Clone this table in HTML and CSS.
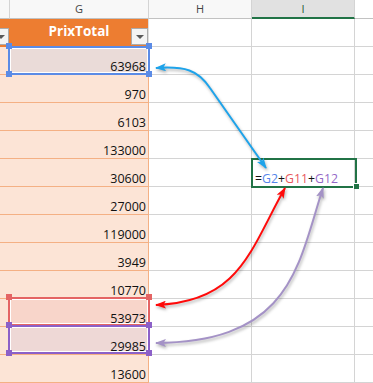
FILE: index.html
```html
<!DOCTYPE html>
<html>
<head>
<meta charset="utf-8">
<link rel="stylesheet" href="styles.css">
</head>
<body>
<div class="sheet">
  <div class="grid">
    <div class="ch"></div>
    <div class="ch">G</div>
    <div class="ch">H</div>
    <div class="ch ch-sel">I</div>
    <div class="ch ch-end"></div>

    <div class="th th-f"><span class="dd"></span></div>
    <div class="th th-g"><span></span><span class="th-label">PrixTotal</span><span class="dd"></span></div>
    <div class="e"></div><div class="e"></div><div class="e e-last"></div>

    <div class="d"></div><div class="d d-g t-blue">63968</div><div class="e"></div><div class="e"></div><div class="e e-last"></div>
    <div class="d"></div><div class="d d-g">970</div><div class="e"></div><div class="e"></div><div class="e e-last"></div>
    <div class="d"></div><div class="d d-g">6103</div><div class="e"></div><div class="e"></div><div class="e e-last"></div>
    <div class="d"></div><div class="d d-g">133000</div><div class="e"></div><div class="e"></div><div class="e e-last"></div>
    <div class="d"></div><div class="d d-g">30600</div><div class="e"></div><div class="e fx">=<span class="rb">G2</span>+<span class="rr">G11</span>+<span class="rp">G12</span></div><div class="e e-last"></div>
    <div class="d"></div><div class="d d-g">27000</div><div class="e"></div><div class="e"></div><div class="e e-last"></div>
    <div class="d"></div><div class="d d-g">119000</div><div class="e"></div><div class="e"></div><div class="e e-last"></div>
    <div class="d"></div><div class="d d-g">3949</div><div class="e"></div><div class="e"></div><div class="e e-last"></div>
    <div class="d"></div><div class="d d-g">10770</div><div class="e"></div><div class="e"></div><div class="e e-last"></div>
    <div class="d"></div><div class="d d-g t-red">53973</div><div class="e"></div><div class="e"></div><div class="e e-last"></div>
    <div class="d"></div><div class="d d-g t-purple">29985</div><div class="e"></div><div class="e"></div><div class="e e-last"></div>
    <div class="d"></div><div class="d d-g">13600</div><div class="e"></div><div class="e"></div><div class="e e-last"></div>
  </div>

  <div class="sel sel-blue"><i class="hd tl"></i><i class="hd tr"></i><i class="hd bl"></i><i class="hd br"></i></div>
  <div class="sel sel-red"><i class="hd tl"></i><i class="hd tr"></i><i class="hd bl"></i><i class="hd br"></i></div>
  <div class="sel sel-purple"><i class="hd tl"></i><i class="hd tr"></i><i class="hd bl"></i><i class="hd br"></i></div>
  <div class="active"><i class="fill-handle"></i></div>

  <svg class="arrows" width="373" height="383" viewBox="0 0 373 383">
    <defs>
      <marker id="mb" viewBox="0 0 11 8" refX="10" refY="4" markerWidth="11" markerHeight="8" markerUnits="userSpaceOnUse" orient="auto-start-reverse">
        <path d="M0,0 L11,4 L0,8 L2.5,4 z" fill="#1ea3ea"/>
      </marker>
      <marker id="mr" viewBox="0 0 11 8" refX="10" refY="4" markerWidth="11" markerHeight="8" markerUnits="userSpaceOnUse" orient="auto-start-reverse">
        <path d="M0,0 L11,4 L0,8 L2.5,4 z" fill="#ff0a0a"/>
      </marker>
      <marker id="mp" viewBox="0 0 11 8" refX="10" refY="4" markerWidth="11" markerHeight="8" markerUnits="userSpaceOnUse" orient="auto-start-reverse">
        <path d="M0,0 L11,4 L0,8 L2.5,4 z" fill="#a492c6"/>
      </marker>
    </defs>
    <path class="ar ar-b" d="M156,68 C185,66 198,70 210,88 L266,168" marker-start="url(#mb)" marker-end="url(#mb)"/>
    <path class="ar ar-r" d="M285,188 C250,250 240,302 156,305" marker-start="url(#mr)" marker-end="url(#mr)"/>
    <path class="ar ar-p" d="M323,188 C298,265 292,342 156,343" marker-start="url(#mp)" marker-end="url(#mp)"/>
  </svg>
</div>
</body>
</html>
```
FILE: styles.css
```css
html, body {
  margin: 0;
  padding: 0;
  background: #fff;
}

body {
  font-family: "Open Sans", "Liberation Sans", sans-serif;
}

.sheet {
  position: relative;
  width: 373px;
  height: 383px;
  overflow: hidden;
  background: #fff;
}

.grid {
  display: grid;
  grid-template-columns: 10px 139px 103px 103px 18px;
  grid-template-rows: 19px repeat(13, 28px);
}

.grid > div {
  box-sizing: border-box;
  min-width: 0;
}

/* column headers */
.ch {
  background: #f8f8f8;
  border-right: 1px solid #d4d4d4;
  border-bottom: 1px solid #c2c2c2;
  color: #444;
  font-size: 11px;
  line-height: 14px;
  display: flex;
  align-items: center;
  justify-content: center;
}

.ch-sel {
  background: #e1e1e1;
  border-bottom: 2px solid #217346;
  color: #1e5a37;
}

.ch-end {
  border-right: none;
  background: #fff;
}

/* table header row */
.th {
  background: #ed7d31;
}

.th-f {
  display: flex;
  justify-content: flex-end;
  align-items: flex-end;
  overflow: hidden;
  padding: 0 1px 2px 0;
}

.th-g {
  display: grid;
  grid-template-columns: 17px 1fr 17px;
  align-items: end;
  border-right: 1px solid #dedede;
  padding: 0 0 2px 0;
}

.th-label {
  align-self: center;
  text-align: center;
  color: #fff;
  font-weight: 700;
  font-size: 13.5px;
  line-height: 16px;
  padding-bottom: 2px;
}

.dd {
  flex-shrink: 0;
  width: 17px;
  height: 17px;
  box-sizing: border-box;
  background: #f4f4f4;
  border: 1px solid #ababab;
  display: flex;
  align-items: center;
  justify-content: center;
}

.dd::after {
  content: "";
  width: 0;
  height: 0;
  border-left: 4px solid transparent;
  border-right: 4px solid transparent;
  border-top: 4px solid #5a5a5a;
  margin-top: 1px;
}

/* data cells */
.d {
  background: #fce4d6;
  border-bottom: 1px solid #f4b084;
}

.d-g {
  border-right: 1px solid #f4b084;
  display: flex;
  align-items: flex-end;
  justify-content: flex-end;
  padding-right: 2px;
  font-size: 12.5px;
  line-height: 15px;
  color: #111;
}

.t-blue { background: #eadbd8; }
.t-red { background: #f8d5ca; }
.t-purple { background: #eed8d6; }

.e {
  background: #fff;
  border-right: 1px solid #d4d4d4;
  border-bottom: 1px solid #d4d4d4;
}

.e-last {
  border-right: none;
}

.fx {
  display: flex;
  align-items: flex-end;
  padding-left: 3px;
  font-size: 12.3px;
  line-height: 15px;
  color: #111;
  white-space: nowrap;
}

.rb { color: #5585ea; }
.rr { color: #e8585c; }
.rp { color: #9468c8; }

/* overlays */
.sel {
  position: absolute;
  left: 8px;
  width: 142px;
  height: 29px;
  box-sizing: border-box;
  border: 2px solid;
  box-shadow: inset 0 0 0 1px #fff;
}

.sel-blue { top: 46px; border-color: #5b8be6; color: #5b8be6; }
.sel-red { top: 297px; border-color: #e46464; color: #e46464; }
.sel-purple { top: 325px; border-color: #8c60c8; color: #8c60c8; }

.hd {
  position: absolute;
  width: 6px;
  height: 6px;
  background: currentColor;
}

.hd.tl { left: -4px; top: -5px; }
.hd.tr { right: -4px; top: -5px; }
.hd.bl { left: -4px; bottom: -4px; }
.hd.br { right: -4px; bottom: -4px; }

.active {
  position: absolute;
  left: 251px;
  top: 158px;
  width: 106px;
  height: 30px;
  box-sizing: border-box;
  border: 2px solid #217346;
}

.fill-handle {
  position: absolute;
  right: -4px;
  bottom: -3px;
  width: 5px;
  height: 5px;
  background: #217346;
  border-left: 1px solid #fff;
  border-top: 1px solid #fff;
}

.arrows {
  position: absolute;
  left: 0;
  top: 0;
}

.ar {
  fill: none;
  stroke-width: 2;
  filter: drop-shadow(1px 2px 1.5px rgba(0, 0, 0, 0.3));
}

.ar-b { stroke: #1ea3ea; }
.ar-r { stroke: #ff0a0a; }
.ar-p { stroke: #a492c6; }
```
